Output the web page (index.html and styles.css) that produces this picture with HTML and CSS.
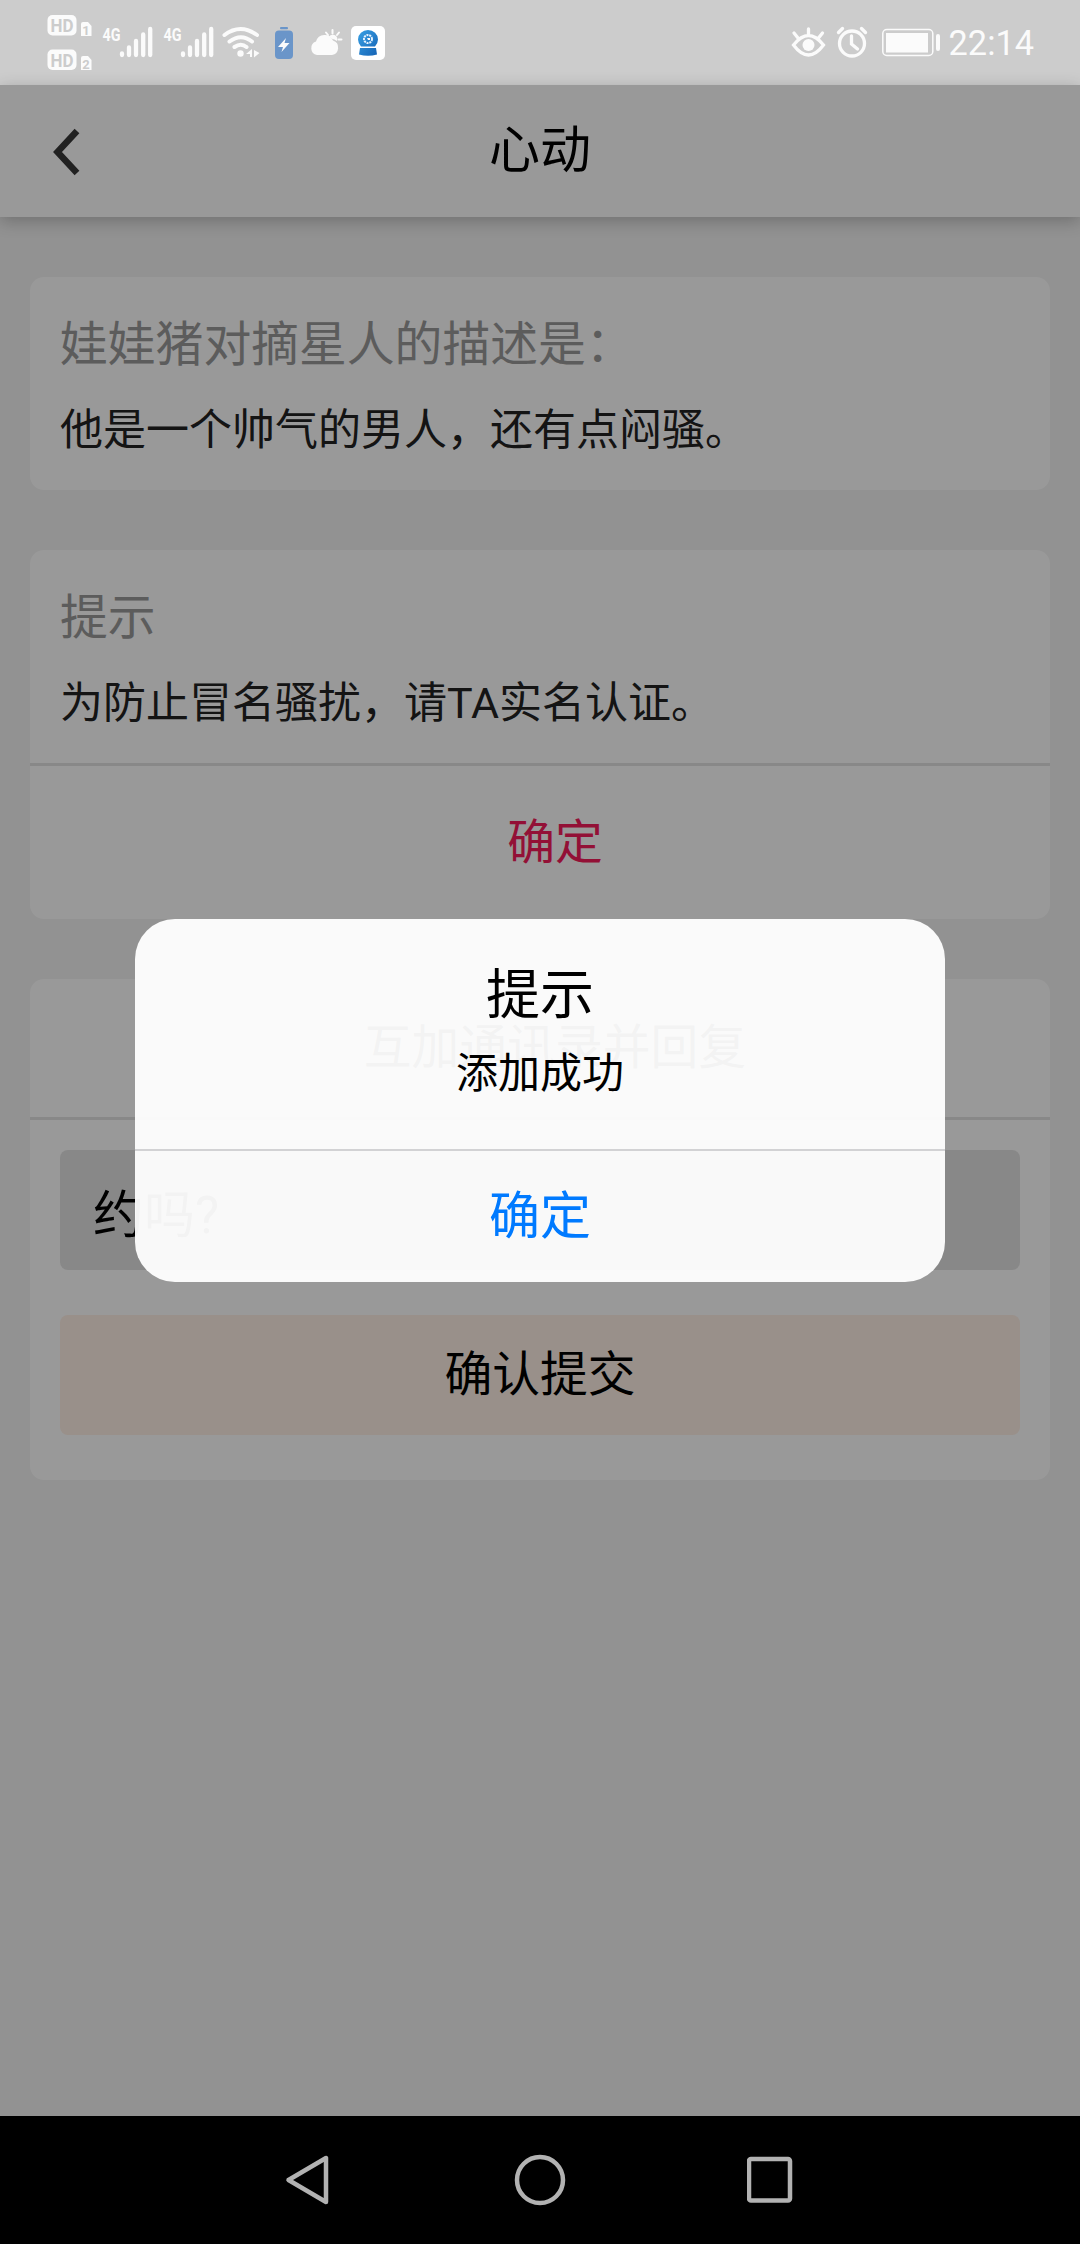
FILE: index.html
```html
<!DOCTYPE html>
<html lang="zh-CN">
<head>
<meta charset="utf-8">
<title>心动</title>
<link rel="stylesheet" href="styles.css">
</head>
<body>
<div class="phone">
  <header class="status">
    <svg class="status-left" width="400" height="85" viewBox="0 0 400 85" fill="#fbfbfb">
      <g class="hd">
        <rect x="47.500" y="15" width="29" height="20.500" rx="5"/>
        <text x="62" y="32" font-size="18.500" textLength="23" lengthAdjust="spacingAndGlyphs">HD</text>
        <path d="M83 22h5l3.500 4v10h-10.500v-12q0-2 2-2z"/>
        <text x="86" y="34.500" font-size="13">1</text>
        <rect x="47.500" y="49.500" width="29" height="20.500" rx="5"/>
        <text x="62" y="66.500" font-size="18.500" textLength="23" lengthAdjust="spacingAndGlyphs">HD</text>
        <path d="M83 56h5l3.500 4v10h-10.500v-12q0-2 2-2z"/>
        <text x="86" y="68.500" font-size="13">2</text>
      </g>
      <g class="net">
        <text x="102.500" y="41" textLength="18" lengthAdjust="spacingAndGlyphs">4G</text>
        <text x="163.500" y="41" textLength="18" lengthAdjust="spacingAndGlyphs">4G</text>
      </g>
      <g stroke="#fbfbfb" stroke-width="4.300" stroke-linecap="round">
        <path d="M122 53.500v1.500M129 47.500v7.500M136 41v14M143.200 34.500v20.500M150.200 29v26"/>
        <path d="M183 53.500v1.500M190 47.500v7.500M197 41v14M204.200 34.500v20.500M211.200 29v26"/>
      </g>
      <g fill="none" stroke="#fbfbfb" stroke-width="4" stroke-linecap="round">
        <path d="M224.500 35Q240.500 23 257 35M229.500 41.500Q241 33 252 41.500M234.500 47Q241 42.500 246.500 47"/>
      </g>
      <circle cx="240.500" cy="53.500" r="3.200"/>
      <path d="M246 54l6-5v8h-2v-3zM254 50l5.500 3-5.500 4.500z"/>
      <g fill="#6a95c9"><rect x="280" y="27" width="8" height="2.300" rx="1"/><rect x="275" y="30.500" width="18" height="28.500" rx="4"/></g>
      <path d="M286 38l-8 9h5l-1.500 5 8-9h-5z"/>
      <path d="M317 55a7 7 0 0 1-1-13.500 9 9 0 0 1 17-1 7.500 7.500 0 0 1-1 14.500z"/>
      <path d="M328.500 37a6 6 0 0 1 6-2 5 5 0 0 1 2.500 6q-3-2-4.500-2-2-2-4-2z"/>
      <path d="M332.500 30v3.500M326 32.500l2 2.500M339 32.500l-2 2.500M338.500 39.500h3" stroke="#fbfbfb" stroke-width="2" stroke-linecap="round"/>
      <rect x="351" y="26" width="34" height="34" rx="5" fill="#fff"/>
      <linearGradient id="orb" x1="0" y1="0" x2="1" y2="1"><stop offset="0" stop-color="#38a0e4"/><stop offset="1" stop-color="#1562b4"/></linearGradient>
      <path d="M361 46.500Q358 43 358 39.500a10 9.500 0 0 1 20 0Q378 43 375 46.500zM360 48h16l1 6.500q-9 2.500-18 0z" fill="url(#orb)"/>
      <circle cx="368" cy="39" r="4" fill="none" stroke="#e4f2ff" stroke-width="2" stroke-dasharray="2 .8"/>
      <path d="M367 38h3v2h-2z"/>
    </svg>
    <div class="status-right">
      <svg width="155" height="40" viewBox="790 23 155 40" fill="none" stroke="#fbfbfb" stroke-width="3.300" stroke-linecap="round">
        <path d="M793.500 45Q808.500 26 823.500 45Q808.500 65 793.500 45zM808.500 29v5M794 33l4 5M822.500 33l-4 5"/>
        <circle cx="808.500" cy="45" r="6" fill="#fbfbfb" stroke="none"/>
        <circle cx="852" cy="43.500" r="12.500"/>
        <path d="M851.500 36v8l6 5M838.500 32.500l4-4M865.500 32.500l-4-4"/>
        <rect x="882.800" y="29.500" width="50" height="26" rx="4" stroke-width="1.500"/>
        <rect x="886" y="33" width="42" height="19.500" fill="#fbfbfb" stroke="none"/>
        <path d="M938 36v13" stroke-width="4"/>
      </svg>
      <span class="clock">22:14</span>
    </div>
  </header>

  <main class="app">
    <nav class="topbar">
      <svg class="back" width="30" height="48" viewBox="0 0 30 48"><path d="M27 3L7.500 24 27 45" fill="none" stroke="#383838" stroke-width="6.500"/></svg>
      <h1>心动</h1>
    </nav>
    <div class="cards">
      <section class="card">
        <div class="info">
          <h2>娃娃猪对摘星人的描述是：</h2>
          <p>他是一个帅气的男人，还有点闷骚。</p>
        </div>
      </section>
      <section class="card">
        <div class="info">
          <h2>提示</h2>
          <p>为防止冒名骚扰，请TA实名认证。</p>
        </div>
        <div class="action">确定</div>
      </section>
      <section class="card">
        <div class="reply-title">互加通讯录并回复</div>
        <div class="reply">
          <div class="field">约吗?</div>
          <div class="submit">确认提交</div>
        </div>
      </section>
    </div>
    <div class="mask">
      <div class="dialog">
        <div class="dialog-body">
          <h3>提示</h3>
          <p>添加成功</p>
        </div>
        <div class="dialog-ok">确定</div>
      </div>
    </div>
  </main>

  <footer class="softkeys">
    <svg width="50" height="56" viewBox="0 0 50 56"><path d="M43 6v44L5.500 28z"/></svg>
    <svg width="56" height="56" viewBox="0 0 56 56"><circle cx="28" cy="28" r="23"/></svg>
    <svg width="50" height="56" viewBox="0 0 50 56"><rect x="2" y="7" width="41" height="41.500" rx="2"/></svg>
  </footer>
</div>
</body>
</html>
```

FILE: styles.css
```css
* { box-sizing: border-box; margin: 0; padding: 0; }
body {
  font-family: Roboto, "Noto Sans CJK SC", sans-serif;
  color: #000;
}
h1, h2, h3 { font-weight: 400; }
.phone {
  width: 1080px;
  height: 2244px;
  display: flex;
  flex-direction: column;
  overflow: hidden;
}

.status {
  height: 85px;
  background: #ccc;
  display: flex;
  justify-content: space-between;
  padding-right: 46px;
}
.status-left text { text-anchor: middle; }
.hd text { fill: #ccc; font-weight: 700; }
.status-left .net text { text-anchor: start; font-size: 19px; font-weight: 700; }
.status-right { display: flex; align-items: center; gap: 4px; }
.clock {
  margin-top: 1px;
  font-size: 34.3px;
  line-height: 40px;
  color: #fbfbfb;
}

.app {
  position: relative;
  flex: 1;
  background: #f3f3f3;
}
.topbar {
  height: 132px;
  background: #fff;
  display: flex;
  align-items: center;
  padding: 0 50px;
  box-shadow: 0 4px 16px rgba(0, 0, 0, .24);
}
.back { margin-top: 2px; }
.topbar h1 {
  flex: 1;
  margin-right: 30px;
  text-align: center;
  font-size: 51px;
  line-height: 132px;
}

.cards {
  display: flex;
  flex-direction: column;
  gap: 60px;
  padding: 60px 30px;
}
.card {
  background: #fff;
  border-radius: 14px;
}
.info { padding: 32px 30px 28px; }
.info h2 {
  font-size: 47.8px;
  line-height: 72px;
  color: #999;
}
.info p {
  margin-top: 17px;
  font-size: 43px;
  line-height: 64px;
  color: #222;
}
.action {
  height: 156px;
  border-top: 3px solid #e3e3e3;
  padding-left: 30px;
  text-align: center;
  font-size: 47.8px;
  line-height: 154px;
  color: #f51b5a;
}
.reply-title {
  height: 141px;
  border-bottom: 3px solid #e3e3e3;
  padding-left: 30px;
  text-align: center;
  font-size: 47.8px;
  line-height: 139px;
}
.reply {
  display: flex;
  flex-direction: column;
  gap: 45px;
  padding: 30px 30px 45px;
}
.field, .submit {
  height: 120px;
  border-radius: 8px;
}
.field {
  padding-left: 33px;
  background: #e3e3e3;
  font-size: 51px;
  line-height: 131px;
}
.submit {
  background: #fff0e6;
  text-align: center;
  font-size: 47.8px;
  line-height: 120px;
}

.mask {
  position: absolute;
  inset: 0;
  display: flex;
  align-items: center;
  justify-content: center;
  background: rgba(0, 0, 0, .4);
}
.dialog {
  width: 810px;
  height: 363px;
  border-radius: 40px;
  background: rgba(255, 255, 255, .954);
  text-align: center;
}
.dialog-body {
  height: 232px;
  padding-top: 39px;
  border-bottom: 2px solid #d2d2d4;
}
.dialog h3 { font-size: 54px; line-height: 76px; }
.dialog p { margin-top: 10px; font-size: 42px; line-height: 60px; }
.dialog-ok {
  font-size: 51px;
  line-height: 132px;
  color: #007aff;
}

.softkeys {
  height: 128px;
  background: #000;
  display: flex;
  align-items: center;
  justify-content: center;
  gap: 179px;
}
.softkeys svg {
  fill: none;
  stroke: #b2b2b2;
  stroke-width: 4.500;
  stroke-linejoin: round;
}
```
